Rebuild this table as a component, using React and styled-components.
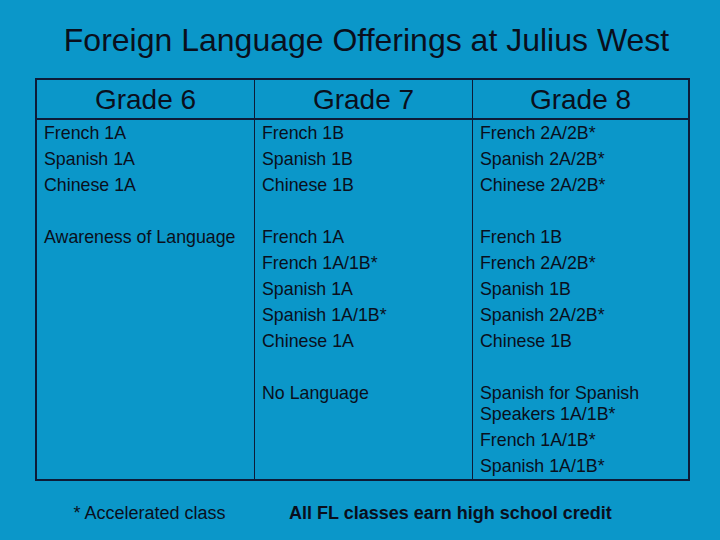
import React from 'react';
import styled, {createGlobalStyle} from 'styled-components';

const GlobalStyle = createGlobalStyle`
    html, body {
        margin: 0;
        padding: 0;
        background-color: #0b97c9;
    }
    * {
        box-sizing: border-box;
    }
`

const Slide = styled.div`
    width: 720px;
    height: 540px;
    background-color: #0b97c9;
    color: #0a0f1c;
    font-family: "Liberation Sans", Arial, sans-serif;
    display: flex;
    flex-direction: column;
    overflow: hidden;
`

const Title = styled.h1`
    margin: 20px 0 0 0;
    padding-left: 13px;
    font-size: 32px;
    font-weight: normal;
    line-height: 40px;
    height: 58px;
    text-align: center;
`

const Table = styled.div`
    width: 655px;
    margin-left: 35px;
    border: 2px solid #0d1b38;
    display: grid;
    grid-template-columns: 217px 218px 1fr;
`

const HeadCell = styled.div`
    height: 40px;
    font-size: 28px;
    line-height: 39px;
    text-align: center;
    border-bottom: 2px solid #0d1b38;
    border-left: ${props => props.first ? '0' : '1.5px solid #0d1b38'};
`

const Cell = styled.div`
    padding: 0 6px ${props => props.last ? '2px' : '28px'} 7px;
    border-left: ${props => props.first ? '0' : '1.5px solid #0d1b38'};
`

const Item = styled.div`
    font-size: 17.8px;
    line-height: 21px;
    margin-top: 5px;

    &:first-child {
        margin-top: 3px;
    }
`

const Footer = styled.div`
    margin-left: 35px;
    margin-top: 21px;
    display: flex;
    font-size: 18px;
    line-height: 22px;
`

const Note = styled.div`
    width: 229px;
    text-align: center;
`

const Credit = styled.div`
    font-weight: bold;
    margin-left: 25px;
`

const rows = [
    [
        ['French 1A', 'Spanish 1A', 'Chinese 1A'],
        ['French 1B', 'Spanish 1B', 'Chinese 1B'],
        ['French 2A/2B*', 'Spanish 2A/2B*', 'Chinese 2A/2B*'],
    ],
    [
        ['Awareness of Language'],
        ['French 1A', 'French 1A/1B*', 'Spanish 1A', 'Spanish 1A/1B*', 'Chinese 1A'],
        ['French 1B', 'French 2A/2B*', 'Spanish 1B', 'Spanish 2A/2B*', 'Chinese 1B'],
    ],
    [
        [],
        ['No Language'],
        ['Spanish for Spanish Speakers 1A/1B*', 'French 1A/1B*', 'Spanish 1A/1B*'],
    ],
]

const App = () => {
    return (
        <>
            <GlobalStyle/>
            <Slide>
                <Title>Foreign Language Offerings at Julius West</Title>
                <Table>
                    <HeadCell first>Grade 6</HeadCell>
                    <HeadCell>Grade 7</HeadCell>
                    <HeadCell>Grade 8</HeadCell>
                    {rows.map((row, r) => row.map((items, c) => (
                        <Cell key={r + '-' + c} first={c === 0} last={r === rows.length - 1}>
                            {items.map(text => <Item key={text}>{text}</Item>)}
                        </Cell>
                    )))}
                </Table>
                <Footer>
                    <Note>* Accelerated class</Note>
                    <Credit>All FL classes earn high school credit</Credit>
                </Footer>
            </Slide>
        </>
    )
}

export default App;
